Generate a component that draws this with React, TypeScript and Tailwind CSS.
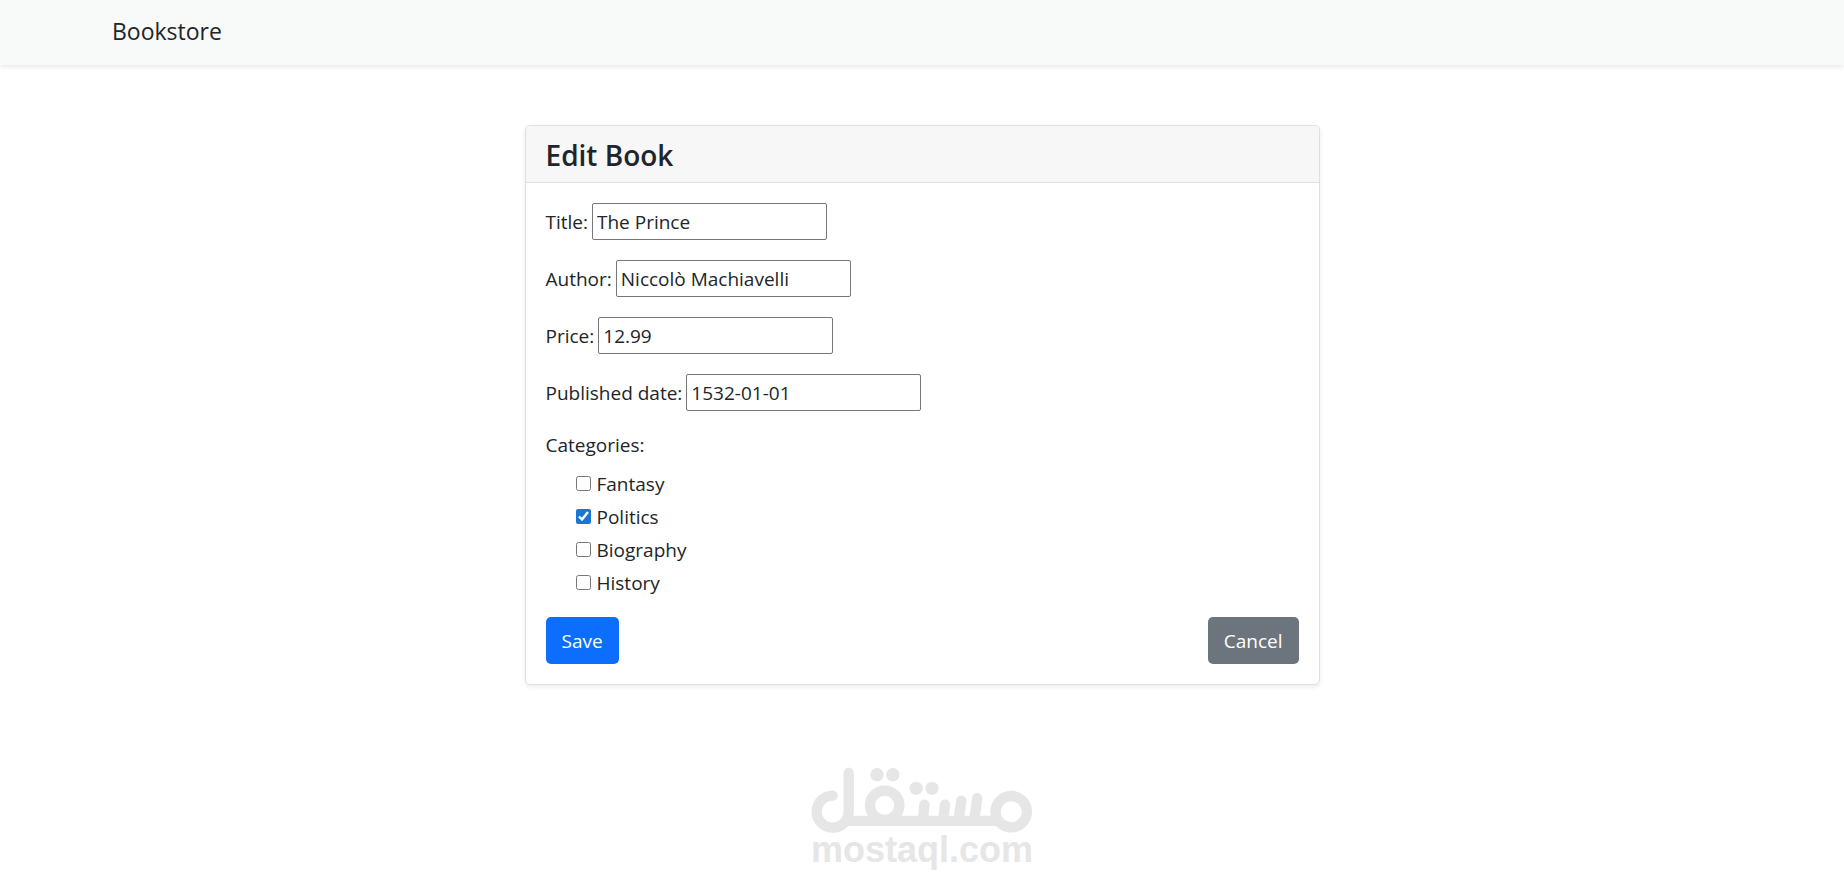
import { useState } from "react";

const fields = [
  { id: "title", label: "Title:", value: "The Prince" },
  { id: "author", label: "Author:", value: "Niccolò Machiavelli" },
  { id: "price", label: "Price:", value: "12.99" },
  { id: "published", label: "Published date:", value: "1532-01-01" },
];

const categories = ["Fantasy", "Politics", "Biography", "History"];

function Navbar() {
  return (
    <header className="bg-[#f8faf9] shadow-[0_2px_5px_rgba(0,0,0,0.09)]">
      <div className="mx-auto max-w-[1650px] px-[15px] pt-[15px] pb-[18px]">
        <a href="#" className="block w-fit text-[23px] leading-8 text-[#212529]">
          Bookstore
        </a>
      </div>
    </header>
  );
}

function Field({ id, label, value }: { id: string; label: string; value: string }) {
  return (
    <div className="flex items-center gap-1">
      <label htmlFor={id}>{label}</label>
      <input
        id={id}
        type="text"
        defaultValue={value}
        className="h-[37px] w-[235px] rounded-[2px] border border-[#767676] bg-white px-1"
      />
    </div>
  );
}

function MostaqlLogo() {
  return (
    <div className="mx-auto mt-[82px] flex w-[222px] flex-col items-center text-[#e6e6e6]">
      <svg viewBox="62 52 666 198" className="h-[66px] w-[222px]" fill="none" stroke="currentColor" strokeWidth="31" strokeLinecap="round" aria-hidden="true">
        <path d="M175 69V188A48 48 0 1 1 127 138" />
        <path d="M165 213.500H632" strokeLinecap="butt" />
        <circle cx="283" cy="167" r="44" />
        <path d="M402 165L398 208M464 165L459 208M513 153L505 208M561 145L552 208" />
        <circle cx="662.500" cy="186" r="47" />
        <g fill="currentColor" stroke="none">
          <circle cx="260" cy="75" r="20" />
          <circle cx="307.500" cy="75" r="20" />
          <circle cx="377.500" cy="116" r="20" />
          <circle cx="425" cy="116" r="20" />
        </g>
      </svg>
      <span className="font-['Liberation_Sans',Arial,sans-serif] text-[36px] leading-[34px] font-bold">mostaql.com</span>
    </div>
  );
}

export default function App() {
  const [selected, setSelected] = useState<string[]>(["Politics"]);
  const toggle = (name: string) =>
    setSelected((s) => (s.includes(name) ? s.filter((n) => n !== name) : [...s, name]));

  return (
    <div className="min-h-screen bg-white font-['Open_Sans','Noto_Sans',sans-serif] text-[19px] leading-[30px] text-[#212529]">
      <Navbar />
      <main className="px-4 pt-[60px]">
        <section className="mx-auto max-w-[795px] rounded-[5px] border border-[#dfdfdf] bg-white shadow-[0_2px_5px_rgba(0,0,0,0.08)]">
          <div className="rounded-t-[4px] border-b border-[#dfdfdf] bg-[#f7f7f7] px-5 pt-[11px] pb-[9px]">
            <h1 className="text-[28px] leading-9 font-semibold">Edit Book</h1>
          </div>
          <form className="p-5" onSubmit={(e) => e.preventDefault()}>
            <div className="flex flex-col gap-5">
              {fields.map((f) => (
                <Field key={f.id} {...f} />
              ))}
            </div>
            <fieldset className="mt-[19px]">
              <legend className="mb-2">Categories:</legend>
              <ul className="flex flex-col pl-[30px]">
                {categories.map((name) => (
                  <li key={name} className="h-[33px]">
                    <label className="flex items-start gap-[6px] leading-8">
                      <input
                        type="checkbox"
                        checked={selected.includes(name)}
                        onChange={() => toggle(name)}
                        className="mt-2 size-[15px] accent-[#1976d2]"
                      />
                      {name}
                    </label>
                  </li>
                ))}
              </ul>
            </fieldset>
            <div className="mt-[17px] flex justify-between">
              <button type="submit" className="h-[47px] rounded-[5px] bg-[#0d6efd] px-4 text-white">
                Save
              </button>
              <button type="button" className="h-[47px] rounded-[5px] bg-[#6c757d] px-4 text-white">
                Cancel
              </button>
            </div>
          </form>
        </section>
        <MostaqlLogo />
      </main>
    </div>
  );
}
